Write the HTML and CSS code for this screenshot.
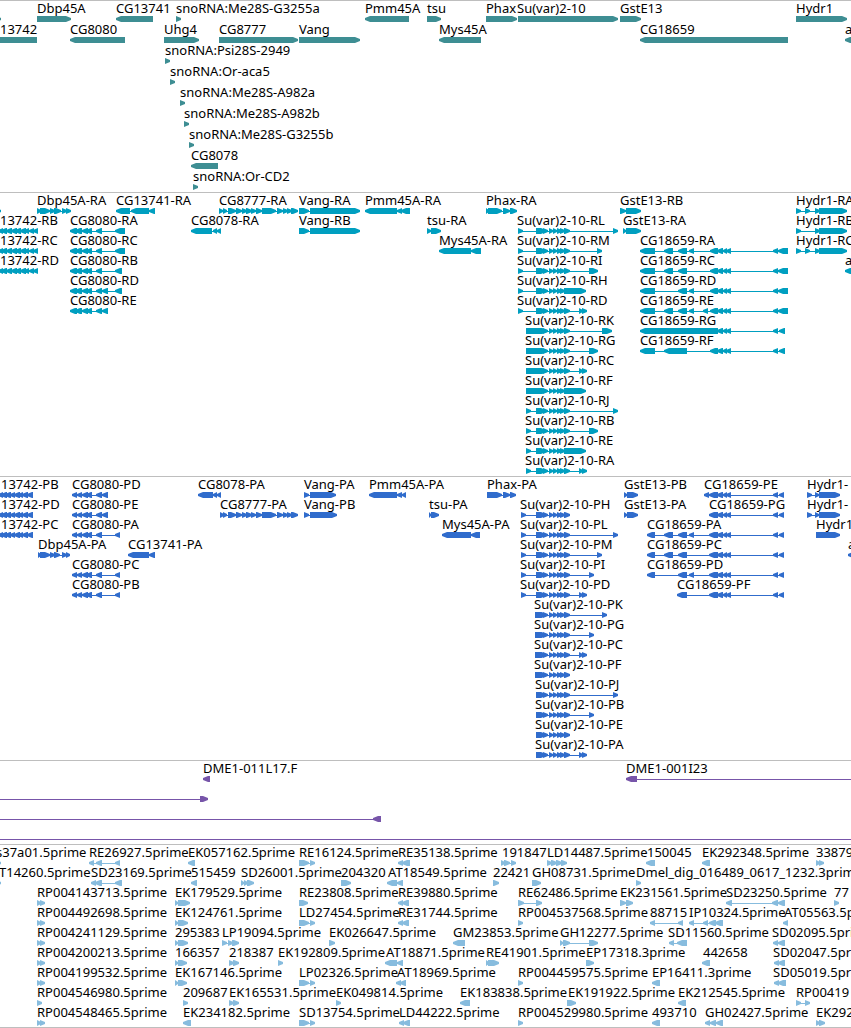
FILE: index.html
```html
<!DOCTYPE html>
<html lang="en">
<head>
<meta charset="utf-8">
<meta name="viewport" content="width=device-width, initial-scale=1">
<title>Genome tracks</title>
<link rel="stylesheet" href="styles.css">
</head>
<body>
<main class="browser">
  <section class="track track-genes" id="genes"></section>
  <section class="track track-transcripts" id="transcripts"></section>
  <section class="track track-proteins" id="proteins"></section>
  <section class="track track-bacs" id="bacs"></section>
  <section class="track track-ests" id="ests"></section>
</main>
<script src="tracks.js"></script>
</body>
</html>
```

FILE: styles.css
```css
body {
  margin: 0;
  background: #fff;
  color: #000;
  font: 13px/12px "Noto Sans", "Open Sans", sans-serif;
}

.browser {
  overflow: hidden;
}

.track {
  border-top: 1px solid #bebebe;
  padding: 1px 0 2px;
}

.track-genes { color: #3e8e93; padding-bottom: 1px; }
.track-transcripts { color: #009fc0; }
.track-proteins { color: #306ccc; }
.track-bacs { color: #7755a9; }
.track-ests { color: #87bcde; padding-bottom: 1px; border-bottom: 1px solid #bebebe; }

.row {
  position: relative;
  height: 20px;
}

.track-genes .row {
  height: 21px;
}

.labels {
  height: 14px;
}

.label {
  position: absolute;
  top: 0;
  color: #000;
  white-space: nowrap;
}

.glyphs {
  display: block;
  width: 100%;
  height: 6px;
  fill: currentColor;
}
```

FILE: tracks.js
```js
// Each row lists features as "label|label x|strand and blocks".
// Blocks are start-end pairs; blocks of a feature are joined by a thin line.
const CORE = "536-546,543-548,549-553,553-557,557-562,560-565,564-570";
const TAIL = "710-718,717-723,723-727,726-731,773-778";
const PTAIL = "709-718,717-723,723-727,726-731,773-778,779-784";
const R13742 = "<-2-3,1-7,6-12,11-17,15-21,20-26,24-29,29-34,33-38";
const P13742 = "<-2-3,1-7,5-11,10-15,14-20,18-23,22-28,27-33";
const R8080 = "<70-77,75-82,82-88,86-92,96-102";
const P8080 = "<72-77,77-82,82-88,86-92,96-102";
const E8777 = "223-227,228-236,236-242,242-247,246-252,251-256,256-262,262-276,277-283,283-288,287-292,291-298";

const TRACKS = {
  genes: [
    ["||>-4-1", "Dbp45A|37|>37-71", "CG13741|116|<116-153", "snoRNA:Me28S-G3255a|176|>176-181", "Pmm45A|365|<365-409", "tsu|427|>427-441", "Phax|486|>486-517", "Su(var)2-10|517|>518-618", "GstE13|620|>620-641", "Hydr1|796|>796-847"],
    ["13742|0|<-20-37", "CG8080|70|<70-125", "Uhg4|164|>164-199", "CG8777|219|>219-298", "Vang|299|>299-360", "Mys45A|439|<439-481", "CG18659|640|<640-788", "a|845|<845-870"],
    ["snoRNA:Psi28S-2949|165|>165-170"],
    ["snoRNA:Or-aca5|170|>170-175"],
    ["snoRNA:Me28S-A982a|180|>180-185"],
    ["snoRNA:Me28S-A982b|184|>184-189"],
    ["snoRNA:Me28S-G3255b|189|>189-194"],
    ["CG8078|191|<191-218"],
    ["snoRNA:Or-CD2|193|>193-198"]
  ],
  transcripts: [
    ["||>-4-1", "Dbp45A-RA|37|>37-41,40-50,50-55,54-61,62-67,66-71", "CG13741-RA|116|<116-130,131-149,149-155", "CG8777-RA|219|>219-223," + E8777, "Vang-RA|299|>299-309,310-360", "Pmm45A-RA|365|<365-397,397-402,401-410", "Phax-RA|486|>486-489,488-502,503-510,510-517", "GstE13-RB|620|>620-626,626-641", "Hydr1-RA|796|>796-801,805-810,815-820,819-847"],
    ["13742-RB|0|" + R13742, "CG8080-RA|70|" + R8080 + ",115-125", "CG8078-RA|191|<191-212,213-217,217-221", "Vang-RB|299|>299-309,310-360", "tsu-RA|427|>427-431,431-441", "Su(var)2-10-RL|517|>518-523," + CORE + ",613-618", "GstE13-RA|623|>623-626,626-641", "Hydr1-RB|796|>796-801,815-820,819-847"],
    ["13742-RC|0|" + R13742, "CG8080-RC|70|" + R8080 + ",115-125", "Mys45A-RA|439|<439-471,471-481", "Su(var)2-10-RM|517|>518-523," + CORE + ",597-602", "CG18659-RA|640|<640-655,664-673,678-687,689-694," + TAIL + ",778-788", "Hydr1-RC|796|>796-801,805-810,815-820,819-847"],
    ["13742-RD|0|" + R13742, "CG8080-RB|70|" + R8080 + ",115-122", "Su(var)2-10-RI|517|>518-523," + CORE + ",589-598", "CG18659-RC|640|<640-655,664-673,678-687," + TAIL + ",778-788", "a|845|<845-870"],
    ["CG8080-RD|70|" + R8080 + ",102-108,115-122", "Su(var)2-10-RH|517|>518-523," + CORE + ",565-586", "CG18659-RD|640|<640-655,678-687,689-694," + TAIL + ",778-788"],
    ["CG8080-RE|70|" + R8080 + ",102-108", "Su(var)2-10-RD|517|>518-523," + CORE + ",579-583,582-587", "CG18659-RE|640|<640-655,664-673,678-687,689-694,703-708," + TAIL + ",778-788"],
    ["Su(var)2-10-RK|525|>526-547," + CORE + ",602-612", "CG18659-RG|640|<640-718," + TAIL + ",779-785"],
    ["Su(var)2-10-RG|525|>526-547," + CORE + ",589-598", "CG18659-RF|640|<640-655,664-687," + TAIL + ",779-785"],
    ["Su(var)2-10-RC|525|>526-547," + CORE + ",579-583,582-587"],
    ["Su(var)2-10-RF|525|>526-547," + CORE + ",565-586"],
    ["Su(var)2-10-RJ|525|>526-531," + CORE + ",613-618"],
    ["Su(var)2-10-RB|525|>526-531," + CORE + ",589-598"],
    ["Su(var)2-10-RE|525|>526-531," + CORE + ",565-586"],
    ["Su(var)2-10-RA|525|>526-531," + CORE + ",579-583,582-587"]
  ],
  proteins: [
    ["13742-PB|1|" + P13742, "CG8080-PD|72|" + P8080 + ",102-108", "CG8078-PA|198|<198-213,213-217,217-221", "Vang-PA|304|>304-309,310-336", "Pmm45A-PA|369|<369-397,397-402,402-406", "Phax-PA|487|>487-502,503-510,510-516", "GstE13-PB|624|>624-627,627-638", "CG18659-PE|704|<704-709," + PTAIL, "Hydr1-|807|>807-812,815-819,819-840"],
    ["13742-PD|1|" + P13742, "CG8080-PE|72|" + P8080 + ",102-108", "CG8777-PA|220|>220-224," + E8777, "Vang-PB|304|>304-309,310-337", "tsu-PA|429|>429-431,431-439", "Su(var)2-10-PH|520|>521-526," + CORE, "GstE13-PA|624|>624-627,627-638", "CG18659-PG|709|<" + PTAIL, "Hydr1-|807|>807-812,815-819,819-840"],
    ["13742-PC|1|" + P13742, "CG8080-PA|72|" + P8080 + ",115-120", "Mys45A-PA|442|<442-471,471-480", "Su(var)2-10-PL|520|>521-526," + CORE + ",613-618", "CG18659-PA|647|<647-655,664-673,678-687,689-694," + PTAIL, "Hydr1|816|>816-840"],
    ["Dbp45A-PA|38|>38-41,40-50,50-55,54-60,62-67,66-70", "CG13741-PA|128|<128-149,149-155", "Su(var)2-10-PM|520|>521-526," + CORE + ",597-602", "CG18659-PC|647|<647-655,664-673,678-687," + PTAIL, "a|848|<848-870"],
    ["CG8080-PC|72|" + P8080 + ",115-120", "Su(var)2-10-PI|520|>521-526," + CORE + ",589-594", "CG18659-PD|647|<647-655,678-687,689-694," + PTAIL],
    ["CG8080-PB|72|" + P8080 + ",115-120", "Su(var)2-10-PD|520|>521-526," + CORE + ",579-583,582-587", "CG18659-PF|677|<677-687," + PTAIL],
    ["Su(var)2-10-PK|534|>535-546," + CORE + ",602-607"],
    ["Su(var)2-10-PG|534|>535-546," + CORE + ",589-594"],
    ["Su(var)2-10-PC|534|>535-546," + CORE + ",579-583,582-587"],
    ["Su(var)2-10-PF|534|>535-546," + CORE],
    ["Su(var)2-10-PJ|535|>" + CORE + ",613-618"],
    ["Su(var)2-10-PB|535|>" + CORE + ",589-594"],
    ["Su(var)2-10-PE|535|>" + CORE],
    ["Su(var)2-10-PA|535|>" + CORE + ",579-583,582-587"]
  ],
  bacs: [
    ["DME1-011L17.F|203|<203-210", "DME1-001I23|626|<626-637,4000-4005"],
    ["||>-20--10,200-208"],
    ["||<-20--10,373-381"],
    ["||>-20--10,4000-4005"]
  ],
  ests: [
    ["s37a01.5prime|-4|>-4-1", "RE26927.5prime|89|<89-94,96-102,115-120", "EK057162.5prime|188|<188-195", "RE16124.5prime|299|>299-309,310-315", "RE35138.5prime|398|<398-403,402-410", "191847|502|>501-505,504-510,511-516", "LD14487.5prime|547|>547-552,551-557,556-562,561-567", "150045|647|<646-655", "EK292348.5prime|702|<702-710", "33879|816|>816-820,819-824"],
    ["T14260.5prime|-1|>-4-1", "SD23169.5prime|91|<91-96,95-102,115-122", "515459|191|<191-197", "SD26001.5prime|241|>241-244,244-248,247-254", "204320|341|>341-351", "AT18549.5prime|388|<387-397,397-403", "22421|493|>493-499", "GH08731.5prime|532|>532-541", "Dmel_dig_016489_0617_1232.3prime|636|>636-641"],
    ["RP004143713.5prime|37|>37-41,40-45", "EK179529.5prime|175|>175-178,178-190", "RE23808.5prime|299|>299-308", "RE39880.5prime|398|<398-403,402-409", "RE62486.5prime|518|>518-524,536-542", "EK231561.5prime|620|>620-626,626-633", "SD23250.5prime|726|<726-732,772-778,778-785", "77|834|>834-839"],
    ["RP004492698.5prime|37|>37-41,40-45", "EK124761.5prime|175|>175-178,178-188", "LD27454.5prime|299|>299-309,310-315", "RE31744.5prime|398|<398-403,402-409", "RP004537568.5prime|518|>518-523", "88715|650|<650-655,678-683", "IP10324.5prime|689|<689-694,703-708,709-716,715-723", "AT05563.5prime|784|<783-788"],
    ["RP004241129.5prime|37|>37-41,40-45", "295383|175|>175-178,178-188", "LP19094.5prime|222|>222-227,228-233,232-239", "EK026647.5prime|329|>329-335", "GM23853.5prime|453|<453-465", "GH12277.5prime|560|>560-563,563-570,589-598", "SD11560.5prime|668|<669-674,677-687", "SD02095.5prime|772|<773-778,778-785"],
    ["RP004200213.5prime|37|>37-41,40-45", "166357|175|>175-178,178-187", "218387|229|>229-234,233-239", "EK192809.5prime|278|>278-283", "AT18871.5prime|386|<385-397,397-403", "RE41901.5prime|486|>486-489,488-499", "EP17318.3prime|586|>586-594", "442658|703|<702-710", "SD02047.5prime|773|<774-779,778-785"],
    ["RP004199532.5prime|37|>37-41,40-45", "EK167146.5prime|175|>175-178,178-187", "LP02326.5prime|299|>299-309,310-315", "AT18969.5prime|397|<396-401,400-406", "RP004459575.5prime|518|>518-523", "EP16411.3prime|652|<652-660", "SD05019.5prime|773|<774-779,778-786"],
    ["RP004546980.5prime|37|>37-42", "209687|183|>183-188", "EK165531.5prime|229|>229-234,233-239", "EK049814.5prime|336|>336-341", "EK183838.5prime|460|<460-470", "EK191922.5prime|568|>567-576", "EK212545.5prime|678|<678-686", "RP00419|796|>796-801,805-810"],
    ["RP004548465.5prime|37|>37-41,40-45", "EK234182.5prime|183|<183-191", "SD13754.5prime|299|>299-309,310-315", "LD44222.5prime|399|<399-404,403-410", "RP004529980.5prime|518|>518-523", "493710|652|<652-660", "GH02427.5prime|705|<705-710,710-716,716-723", "EK292|816|>816-820,819-825"]
  ]
};

function glyphPath(spec) {
  const forward = spec[0] === ">";
  const blocks = spec.slice(1).split(",").map(function (b) {
    const m = b.match(/^(-?\d+)-(-?\d+)$/);
    return [Number(m[1]), Number(m[2])];
  });
  const start = blocks[0][0];
  const end = blocks[blocks.length - 1][1];
  // An arrow head is five pixels long, or the whole block if it is shorter.
  const arrows = blocks.map(function (b) {
    const head = Math.min(5, b[1] - b[0]);
    const tip = forward ? b[1] : b[0];
    const neck = forward ? tip - head : tip + head;
    const back = forward ? b[0] : b[1];
    return "M" + back + " 0L" + neck + " 0L" + tip + " 2V4L" + neck + " 6L" + back + " 6Z";
  });
  const line = blocks.length > 1 ? '<rect x="' + start + '" y="3" width="' + (end - start) + '" height="1"/>' : "";
  return line + arrows.map(function (d) { return '<path d="' + d + '"/>'; }).join("");
}

Object.keys(TRACKS).forEach(function (id) {
  document.getElementById(id).innerHTML = TRACKS[id].map(function (row) {
    let labels = "";
    let glyphs = "";
    row.forEach(function (item) {
      const parts = item.split("|");
      if (parts[0]) {
        labels += '<span class="label" style="left:' + parts[1] + 'px">' + parts[0] + "</span>";
      }
      glyphs += glyphPath(parts[2]);
    });
    return '<div class="row"><div class="labels">' + labels + '</div><svg class="glyphs" aria-hidden="true">' + glyphs + "</svg></div>";
  }).join("");
});
```
